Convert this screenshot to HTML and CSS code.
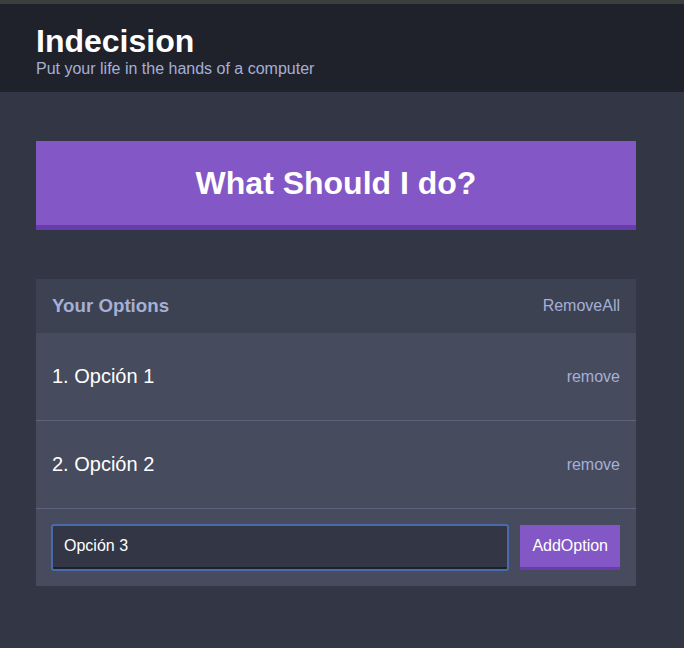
FILE: index.html
```html
<!DOCTYPE html>
<html lang="es">
<head>
<meta charset="utf-8">
<title>Indecision</title>
<link rel="stylesheet" href="styles.css">
</head>
<body>
  <header class="header">
    <div class="container">
      <h1 class="header__title">Indecision</h1>
      <h2 class="header__subtitle">Put your life in the hands of a computer</h2>
    </div>
  </header>
  <main class="container">
    <button class="big-button">What Should I do?</button>
    <section class="widget">
      <div class="widget-header">
        <h3 class="widget-header__title">Your Options</h3>
        <button class="button--link">RemoveAll</button>
      </div>
      <div class="option">
        <p class="option__text">1. Opción 1</p>
        <button class="button--link">remove</button>
      </div>
      <div class="option">
        <p class="option__text">2. Opción 2</p>
        <button class="button--link">remove</button>
      </div>
      <form class="add-option">
        <input class="add-option__input is-focused" type="text" name="option" value="Opción 3">
        <button class="button" type="button">AddOption</button>
      </form>
    </section>
  </main>
</body>
</html>
```

FILE: styles.css
```css
* {
  box-sizing: border-box;
}

html,
body {
  margin: 0;
  padding: 0;
}

body {
  background: #333745;
  border-top: 4px solid #3c3d3d;
  font-family: "Liberation Sans", Arial, Helvetica, sans-serif;
  font-size: 16px;
  min-height: 648px;
}

.container {
  width: 600px;
  margin-left: 36px;
}

.header {
  background: #20222b;
  padding: 19px 0 14px;
  margin-bottom: 49px;
}

.header__title {
  color: #ffffff;
  font-size: 32px;
  font-weight: bold;
  margin: 0;
  line-height: normal;
}

.header__subtitle {
  color: #a5afd7;
  font-size: 16px;
  font-weight: 500;
  margin: 0;
  line-height: normal;
}

.big-button {
  display: block;
  width: 100%;
  background: #8357c5;
  border: none;
  border-bottom: 5px solid #693cad;
  color: #ffffff;
  font-family: inherit;
  font-weight: bold;
  font-size: 32px;
  line-height: normal;
  padding: 23.6px 24px;
  margin: 0 0 49px 0;
  cursor: pointer;
}

.widget {
  background: #464b5e;
  margin-bottom: 48px;
}

.widget-header {
  background: #3c4251;
  color: #a5afd7;
  display: flex;
  justify-content: space-between;
  align-items: center;
  padding: 16px;
}

.widget-header__title {
  margin: 0;
  font-size: 18.72px;
  font-weight: bold;
  line-height: normal;
}

.button--link {
  background: none;
  border: none;
  color: #a5afd7;
  padding: 0;
  font-family: inherit;
  font-size: 16px;
  cursor: pointer;
}

.option {
  display: flex;
  justify-content: space-between;
  align-items: center;
  padding: 32px 16px;
  border-bottom: 1px solid #5c627b;
}

.option__text {
  color: #ffffff;
  font-weight: 500;
  font-size: 20px;
  line-height: normal;
  margin: 0;
}

.add-option {
  display: flex;
  padding: 16px;
}

.add-option__input {
  background: #333745;
  border: none;
  border-bottom: 3px solid #1d2028;
  color: #ffffff;
  flex-grow: 1;
  margin-right: 12px;
  padding: 12px;
  font-family: inherit;
  font-size: 16px;
  line-height: normal;
}

.add-option__input.is-focused {
  outline: 2px solid #4a6aae;
  outline-offset: -1px;
  border-radius: 2px;
}

.button {
  background: #8357c5;
  border: none;
  border-bottom: 3px solid #693cad;
  color: #ffffff;
  font-family: inherit;
  font-weight: 500;
  font-size: 16px;
  padding: 12px;
  cursor: pointer;
}
```
